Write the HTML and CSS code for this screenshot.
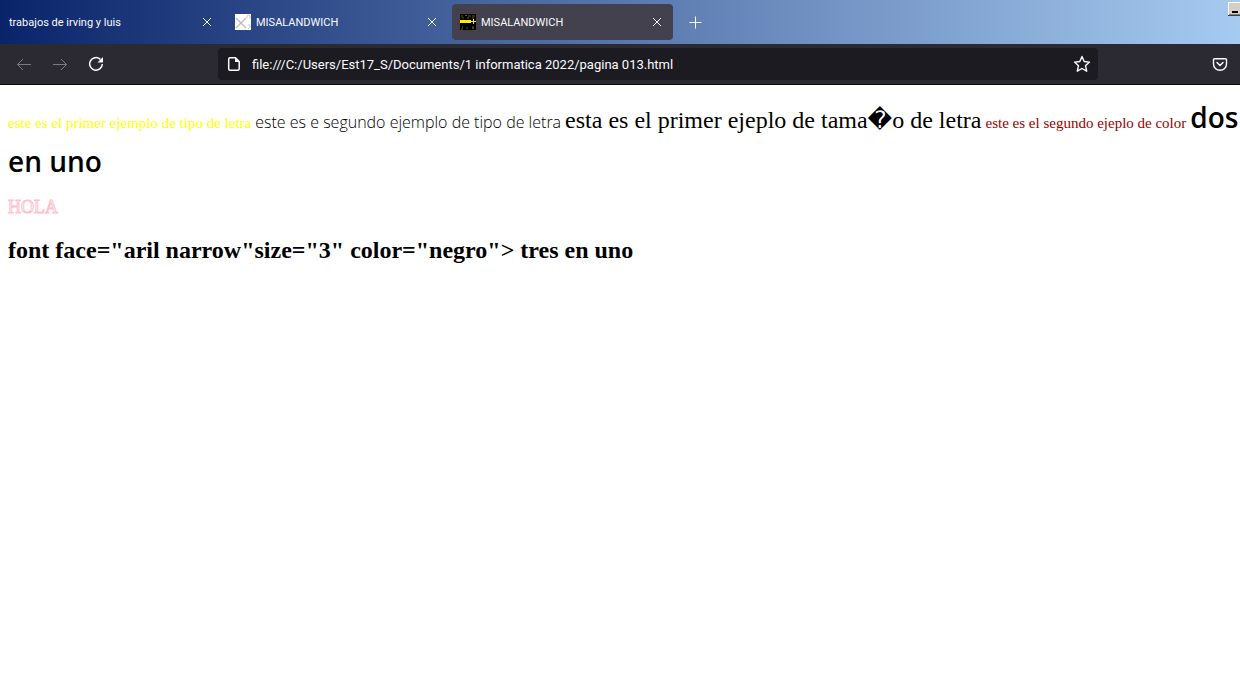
FILE: index.html
```html
<!DOCTYPE html>
<html lang="es">
<head>
<meta charset="utf-8">
<title>MISALANDWICH</title>
<link rel="stylesheet" href="styles.css">
</head>
<body>
<header class="browser">
  <div class="tabs">
    <div class="tab">
      <span class="tab-title">trabajos de irving y luis</span>
      <button class="close" aria-label="Cerrar"><svg width="10" height="10" viewBox="0 0 10 10"><path d="M1 1l8 8M9 1L1 9"/></svg></button>
    </div>
    <div class="tab">
      <svg class="favicon" width="16" height="16" viewBox="0 0 16 16"><path fill="#fff" d="M0 0h16v16H0z"/><path d="M1 4l10 10M11 4L1 14" stroke="#bbb" stroke-width="1.3"/><path d="M12 4V2q1.500-1.500 3 0v3M13 11h2v2l-2 2" stroke="#ccc" fill="none"/></svg>
      <span class="tab-title">MISALANDWICH</span>
      <button class="close" aria-label="Cerrar"><svg width="10" height="10" viewBox="0 0 10 10"><path d="M1 1l8 8M9 1L1 9"/></svg></button>
    </div>
    <div class="tab active">
      <svg class="favicon" width="16" height="16" viewBox="0 0 16 16"><path fill="#000" d="M0 0h16v16H0z"/><path d="M1 2h2M5 1.500h2M8 2h3M12 2h3M2 4h2M7 4h2M12 4h2" stroke="#6a6000"/><path d="M0 7.500h11" stroke="#ffee00" stroke-width="3"/><path d="M11 7.500h5M13.500 5v5" stroke="#ffee00"/><path d="M2 13h1M1 15h2M6 14h2M12 14h2M13 12v3" stroke="#6a6000"/></svg>
      <span class="tab-title">MISALANDWICH</span>
      <button class="close" aria-label="Cerrar"><svg width="10" height="10" viewBox="0 0 10 10"><path d="M1 1l8 8M9 1L1 9"/></svg></button>
    </div>
    <button class="new-tab" aria-label="Nueva pestaña"><svg width="13" height="13" viewBox="0 0 13 13"><path d="M6.500 .5v12M.5 6.500h12"/></svg></button>
    <button class="minimize" aria-label="Minimizar"><svg width="12" height="14" viewBox="0 0 12 14"><path fill="#d4d0c8" d="M0 0h12v14H0z"/><path fill="#fff" d="M0 0h12v1H1v12H0z"/><path fill="#808080" d="M1 12h11v1H1z"/><path fill="#404040" d="M0 13h12v1H0z"/><path d="M4 9h6v2H4z"/></svg></button>
  </div>
  <nav class="toolbar">
    <button class="tool dim" aria-label="Atrás"><svg width="16" height="16" viewBox="0 0 16 16"><path d="M15 8.500H1.500M7 3L1.500 8.500L7 14"/></svg></button>
    <button class="tool dim" aria-label="Adelante"><svg width="16" height="16" viewBox="0 0 16 16"><path d="M1 8.500h13.500M9 3l5.500 5.500L9 14"/></svg></button>
    <button class="tool" aria-label="Recargar"><svg width="16" height="16" viewBox="0 0 16 16"><path stroke-width="1.500" d="M12.500 3.500A6.300 6.300 0 1 0 14.300 8"/><path class="solid" d="M15 1v5.500H9.500z"/></svg></button>
    <div class="address">
      <svg width="16" height="16" viewBox="0 0 16 16"><path stroke-width="1.500" d="M4 1.800h5.500l3.700 3.700v7.200q0 1.500-1.500 1.500H4q-1.300 0-1.300-1.500V3.200q0-1.400 1.300-1.400z"/><path class="solid" d="M9 1.500V6h4.500z"/></svg>
      <input class="url" type="text" aria-label="Dirección" value="file:///C:/Users/Est17_S/Documents/1 informatica 2022/pagina 013.html">
      <button class="star" aria-label="Marcador"><svg width="18" height="18" viewBox="0 0 18 18"><path stroke-width="1.400" stroke-linejoin="round" d="M9 1.500l2.200 5 5.300.6-4 3.600 1.200 5.500L9 13.500l-4.700 2.700 1.200-5.500-4-3.600 5.300-.6z"/></svg></button>
    </div>
    <button class="tool pocket" aria-label="Pocket"><svg width="16" height="16" viewBox="0 0 16 16"><path stroke-width="1.400" d="M2.500 2.700h11q1 0 1 1V8a6.500 6.300 0 0 1-13 0V3.700q0-1 1-1z"/><path stroke-width="1.500" stroke-linecap="round" d="M5 6.500l3 3 3-3"/></svg></button>
  </nav>
</header>
<main class="page">
  <p class="samples"><span class="yellow">este es el primer ejemplo de tipo de letra</span> <span class="light">este es e segundo ejemplo de tipo de letra</span> <span class="large">esta es el primer ejeplo de tama<span class="unknown">&#xFFFD;</span>o de letra</span> <span class="red">este es el segundo ejeplo de color</span> <span class="comic">dos<br>en uno</span></p>
  <p class="hello">HOLA</p>
  <h2 class="heading">font face="aril narrow"size="3" color="negro"&gt; tres en uno</h2>
</main>
</body>
</html>
```
FILE: styles.css
```css
* { box-sizing: border-box; }
body {
  margin: 0;
  background: #fff;
  color: #000;
  font-family: "Liberation Serif", serif;
  overflow-x: hidden;
}
button {
  border: 0;
  padding: 0;
  background: none;
  color: inherit;
  display: flex;
  align-items: center;
  justify-content: center;
}
.browser {
  color: #fbfbfe;
  font-family: Roboto, sans-serif;
}
.browser svg { flex: none; }
.close svg, .new-tab svg, .toolbar svg {
  fill: none;
  stroke: currentColor;
}
.toolbar .solid { fill: currentColor; stroke: none; }
.tabs {
  display: flex;
  align-items: center;
  gap: 4px;
  height: 44px;
  padding-left: 2px;
  background: linear-gradient(90deg, #0a246a, #a6caf0);
}
.tab {
  display: flex;
  align-items: center;
  gap: 5px;
  width: 221px;
  height: 36px;
  padding: 0 11px 0 8px;
  border-radius: 4px;
  font-size: 11px;
}
.tab:first-child { padding-left: 7px; }
.active { background: #42414d; }
.tab-title { flex: 1; white-space: nowrap; }
.new-tab { width: 37px; height: 36px; }
.minimize { align-self: flex-start; margin: 2px 0 0 auto; }
.toolbar {
  display: flex;
  align-items: center;
  height: 41px;
  padding: 0 12px 0 16px;
  background: #2b2a33;
  border-bottom: 1px solid #0c0c0d;
}
.tool { margin-right: 20px; }
.dim { color: #7b7a81; }
.address {
  display: flex;
  align-items: center;
  flex: 1;
  gap: 10px;
  height: 32px;
  margin: 0 114px 0 94px;
  padding: 0 7px 0 8px;
  border-radius: 4px;
  background: #1c1b22;
}
.url {
  flex: 1;
  min-width: 0;
  border: 0;
  padding: 0;
  background: none;
  color: inherit;
  font: 13px Roboto, sans-serif;
}
.pocket { margin-right: 0; }
.page { padding: 13px 0 0 8px; }
.samples {
  margin: 0;
  font-size: 16px;
  line-height: 38px;
  white-space: nowrap;
}
.yellow { color: #ff0; font-size: 15px; }
.light { font-family: "Open Sans", sans-serif; font-weight: 300; font-size: 16px; }
.large { font-size: 24px; }
.unknown { font-family: "DejaVu Sans", sans-serif; }
.red { color: #900; font-size: 15px; }
.comic { font-family: "Open Sans", sans-serif; font-size: 28px; font-weight: 600; }
.hello {
  margin: 11px 0 0;
  font-size: 18px;
  line-height: 20px;
  color: #fff;
  -webkit-text-stroke: 1px #ffc0cb;
}
.heading {
  margin: 19px 0;
  font-size: 24px;
  line-height: 28px;
}
```
